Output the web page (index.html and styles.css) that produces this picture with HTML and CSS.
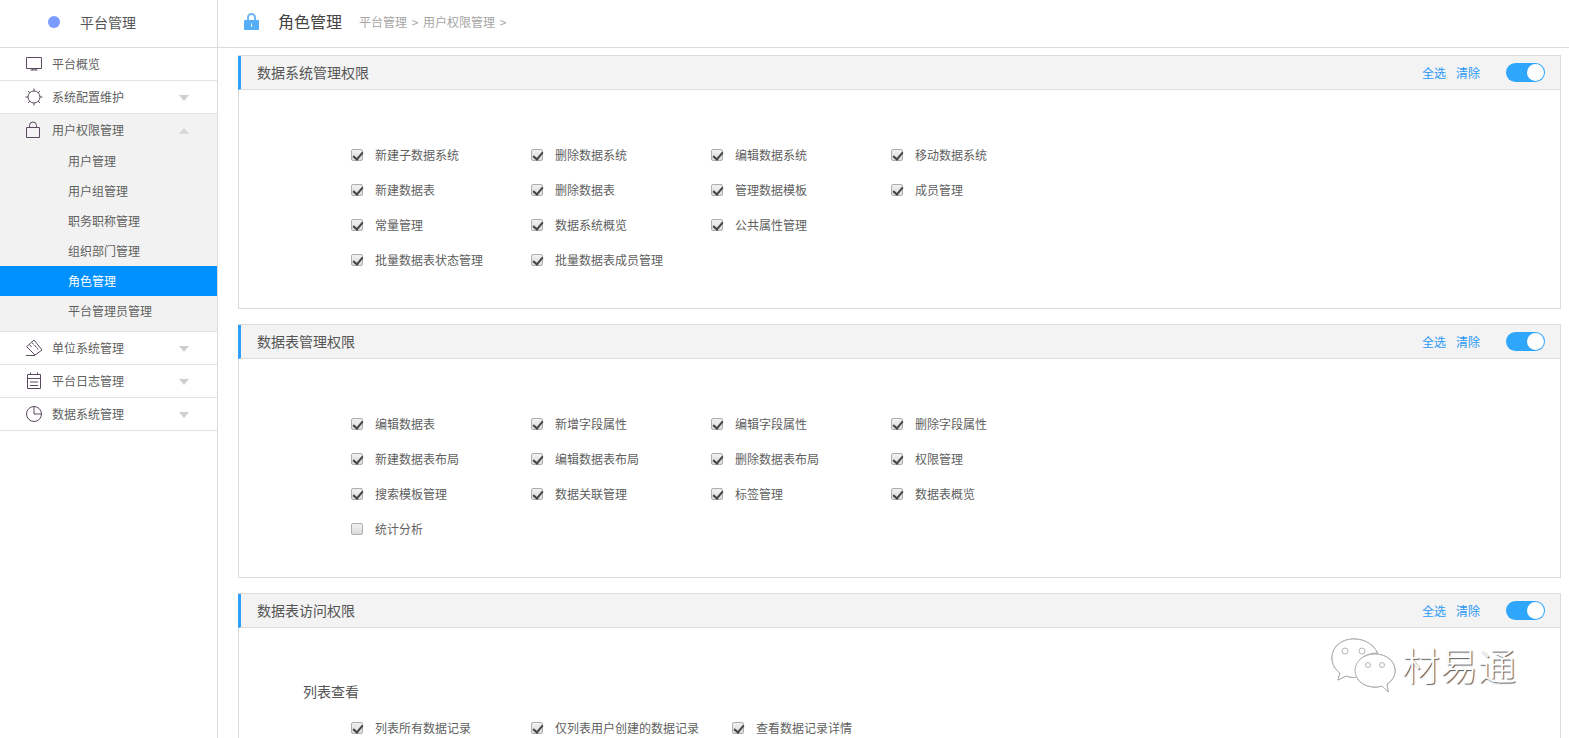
FILE: index.html
```html
<!DOCTYPE html>
<html lang="zh">
<head>
<meta charset="utf-8">
<title>角色管理</title>
<link rel="stylesheet" href="styles.css">
</head>
<body>
<div class="app">
  <aside class="sidebar">
    <div class="brand"><span class="dot"></span><span class="brand-name">平台管理</span></div>
    <nav>
      <div class="nav-row">
        <svg class="nav-icon" viewBox="0 0 18 18"><path d="M1.500 2.500h15v11h-15zM5.500 15h7M7.500 13.500V15M10.500 13.500V15"/></svg>
        <span>平台概览</span>
      </div>
      <div class="nav-row">
        <svg class="nav-icon" viewBox="0 0 18 18"><circle cx="9" cy="9" r="6"/><path d="M9 .5V3M9 15v2.500M.5 9H3M15 9h2.500M3 3l1.800 1.800M13.200 13.200 15 15M3 15l1.800-1.800M13.200 4.800 15 3"/></svg>
        <span>系统配置维护</span><i class="caret"></i>
      </div>
      <div class="nav-group">
        <div class="nav-row open">
          <svg class="nav-icon" viewBox="0 0 18 18"><path d="M1.500 6.500h13v10h-13zM4.500 6.500V4.500a3.500 3.500 0 0 1 7 0v2"/></svg>
          <span>用户权限管理</span><i class="caret up"></i>
        </div>
        <a class="sub">用户管理</a>
        <a class="sub">用户组管理</a>
        <a class="sub">职务职称管理</a>
        <a class="sub">组织部门管理</a>
        <a class="sub active">角色管理</a>
        <a class="sub">平台管理员管理</a>
      </div>
      <div class="nav-row">
        <svg class="nav-icon" viewBox="0 0 18 18"><path d="M1.700 7.700 9 1l8 10-7 5zM4.500 5.500 6.500 8M7 3.500 8.500 5.500M9.500 6 11.500 8.500M12 9 13 10.500M1 16.500h9"/></svg>
        <span>单位系统管理</span><i class="caret"></i>
      </div>
      <div class="nav-row">
        <svg class="nav-icon" viewBox="0 0 18 18"><path d="M2.500 2.500h13v14h-13zM5.500 .5v2M12.500 .5v2M2.500 6.500h13M5 10h8M5 13.500h8"/></svg>
        <span>平台日志管理</span><i class="caret"></i>
      </div>
      <div class="nav-row">
        <svg class="nav-icon" viewBox="0 0 18 18"><circle cx="9" cy="9" r="7.500"/><path d="M9 1.500V9h7.500"/></svg>
        <span>数据系统管理</span><i class="caret"></i>
      </div>
    </nav>
  </aside>

  <main class="main">
    <header class="topbar">
      <svg class="top-icon" viewBox="0 0 15 17"><path class="lock-bow" d="M4 8V4.500a3.500 3.500 0 0 1 7 0V8"/><path class="lock-body" d="M1 7h13a1 1 0 0 1 1 1v8a1 1 0 0 1-1 1H1a1 1 0 0 1-1-1V8a1 1 0 0 1 1-1z"/><path class="lock-key" d="M7 10.500h1V14H7z"/></svg>
      <h1 class="page-title">角色管理</h1>
      <span class="crumbs">平台管理 &gt; 用户权限管理 &gt;</span>
    </header>

    <div class="content">
      <section class="panel">
        <div class="panel-head">
          <h2>数据系统管理权限</h2>
          <a class="link">全选</a><a class="link">清除</a><span class="switch"></span>
        </div>
        <div class="panel-body">
          <div class="row">
            <label class="item"><input type="checkbox" checked>新建子数据系统</label>
            <label class="item"><input type="checkbox" checked>删除数据系统</label>
            <label class="item"><input type="checkbox" checked>编辑数据系统</label>
            <label class="item"><input type="checkbox" checked>移动数据系统</label>
          </div>
          <div class="row">
            <label class="item"><input type="checkbox" checked>新建数据表</label>
            <label class="item"><input type="checkbox" checked>删除数据表</label>
            <label class="item"><input type="checkbox" checked>管理数据模板</label>
            <label class="item"><input type="checkbox" checked>成员管理</label>
          </div>
          <div class="row">
            <label class="item"><input type="checkbox" checked>常量管理</label>
            <label class="item"><input type="checkbox" checked>数据系统概览</label>
            <label class="item"><input type="checkbox" checked>公共属性管理</label>
          </div>
          <div class="row">
            <label class="item"><input type="checkbox" checked>批量数据表状态管理</label>
            <label class="item"><input type="checkbox" checked>批量数据表成员管理</label>
          </div>
        </div>
      </section>

      <section class="panel">
        <div class="panel-head">
          <h2>数据表管理权限</h2>
          <a class="link">全选</a><a class="link">清除</a><span class="switch"></span>
        </div>
        <div class="panel-body">
          <div class="row">
            <label class="item"><input type="checkbox" checked>编辑数据表</label>
            <label class="item"><input type="checkbox" checked>新增字段属性</label>
            <label class="item"><input type="checkbox" checked>编辑字段属性</label>
            <label class="item"><input type="checkbox" checked>删除字段属性</label>
          </div>
          <div class="row">
            <label class="item"><input type="checkbox" checked>新建数据表布局</label>
            <label class="item"><input type="checkbox" checked>编辑数据表布局</label>
            <label class="item"><input type="checkbox" checked>删除数据表布局</label>
            <label class="item"><input type="checkbox" checked>权限管理</label>
          </div>
          <div class="row">
            <label class="item"><input type="checkbox" checked>搜索模板管理</label>
            <label class="item"><input type="checkbox" checked>数据关联管理</label>
            <label class="item"><input type="checkbox" checked>标签管理</label>
            <label class="item"><input type="checkbox" checked>数据表概览</label>
          </div>
          <div class="row">
            <label class="item"><input type="checkbox">统计分析</label>
          </div>
        </div>
      </section>

      <section class="panel">
        <div class="panel-head">
          <h2>数据表访问权限</h2>
          <a class="link">全选</a><a class="link">清除</a><span class="switch"></span>
        </div>
        <div class="panel-body grouped">
          <h3 class="group-title">列表查看</h3>
          <div class="row">
            <label class="item"><input type="checkbox" checked>列表所有数据记录</label>
            <label class="item"><input type="checkbox" checked>仅列表用户创建的数据记录</label>
            <label class="item"><input type="checkbox" checked>查看数据记录详情</label>
          </div>
        </div>
      </section>
    </div>
  </main>
</div>

<div class="watermark">
  <svg class="wm-icon" viewBox="0 0 66 56">
    <path d="M24 1C11 1 2 9 2 20c0 6 3 11 8 15l-2 7 8-4c3 1 6 1.500 9 1.500 0 0 1 0 2 0-1-2-1.500-4-1.500-6.500C25.500 22 35 15 47 15c0 0 0 0 .5 0C44 7 35 1 24 1z"/>
    <path d="M45 16c-11 0-20 7-20 16.500S34 49 45 49c3 0 5-.5 7-1l6 6-1-8c5-3 8-8 8-13.500C65 23 56 16 45 16z"/>
    <circle cx="15" cy="13" r="3"/><circle cx="32" cy="13" r="3"/><circle cx="38" cy="27" r="2.500"/><circle cx="52" cy="27" r="2.500"/>
  </svg>
  <span class="wm-text">材易通</span>
</div>
</body>
</html>
```

FILE: styles.css
```css
* { box-sizing: border-box; }
html, body { margin: 0; height: 100%; overflow: hidden; background: #fff; }
body { font-family: "Noto Sans CJK SC", "Liberation Sans", sans-serif; font-size: 12px; color: #5f5f5f; }

.app { display: flex; height: 738px; overflow: hidden; }

.sidebar { flex: 0 0 218px; border-right: 1px solid #dcdcdc; height: 100%; }
.brand { height: 48px; border-bottom: 1px solid #dcdcdc; display: flex; align-items: center; padding-left: 48px; padding-bottom: 4px; }
.dot { width: 12px; height: 12px; border-radius: 50%; background: #7a9bff; }
.brand-name { margin-left: 20px; font-size: 14px; color: #555; }

.nav-row { height: 33px; border-bottom: 1px solid #e3e3e3; display: flex; align-items: center; padding-left: 25px; position: relative; line-height: 32px; }
.nav-row > span { margin-left: 9px; }
.nav-row.open { height: 32px; border-bottom: 0; }
.nav-icon { width: 18px; height: 18px; fill: none; stroke: #5a4a5e; stroke-width: 1; flex: none; }
.caret { position: absolute; left: 179px; top: 14px; border: 5px solid transparent; border-top: 6px solid #cfcfcf; border-bottom: 0; }
.caret.up { border-top: 0; border-bottom: 6px solid #d8d8d8; }

.nav-group { background: #f2f2f2; border-bottom: 1px solid #e3e3e3; padding-bottom: 5px; }
.sub { display: block; height: 30px; line-height: 30px; padding-left: 68px; color: #5f5f5f; }
.sub.active { background: #0091ff; color: #fff; }

.main { flex: 1; min-width: 0; display: flex; flex-direction: column; }
.topbar { flex: none; height: 48px; border-bottom: 1px solid #dcdcdc; display: flex; align-items: center; padding-left: 26px; padding-bottom: 5px; }
.top-icon { width: 15px; height: 17px; flex: none; }
.lock-bow { fill: none; stroke: #6cb8f8; stroke-width: 2; }
.lock-body { fill: #55aef8; }
.lock-key { fill: #fff; }
.page-title { margin: 0 0 0 19px; font-size: 16px; font-weight: 400; color: #444; }
.crumbs { margin-left: 17px; color: #a5a5a5; word-spacing: 2px; }

.content { padding: 7px 8px 0 20px; }
.panel { border: 1px solid #dcdcdc; margin-bottom: 15px; }
.panel-head { height: 34px; margin-left: -1px; background: #f3f3f3; border-left: 3px solid #2e9ffb; border-bottom: 1px solid #dcdcdc; display: flex; align-items: center; padding-left: 16px; padding-right: 15px; }
.panel-head h2 { margin: -2px auto 0 0; font-size: 14px; font-weight: 400; color: #555; }
.link { color: #2a99f5; margin-right: 10px; }
.link + .link { margin-right: 26px; }
.switch { width: 39px; height: 19px; border-radius: 10px; background: #2ea6fb; position: relative; flex: none; }
.switch::after { content: ""; position: absolute; right: 1px; top: 1px; width: 17px; height: 17px; border-radius: 50%; background: #fff; }

.panel-body { padding: 47px 0 31px 112px; }
.panel-body.grouped { padding-top: 52px; }
.group-title { margin: 0 0 8px -48px; font-size: 14px; line-height: 22px; font-weight: 400; color: #555; }
.row { display: flex; height: 35px; align-items: center; }
.item { min-width: 180px; padding-right: 33px; display: flex; align-items: center; white-space: nowrap; color: #5f5f5f; }
.item input { appearance: none; margin: 0 12px 0 0; width: 12px; height: 12px; flex: none; border: 1px solid #aeaeae; border-radius: 2px; background: linear-gradient(#f1f1f1, #dcdcdc); position: relative; }
.item input:checked::after { content: ""; position: absolute; left: 3px; top: 0; width: 4px; height: 8px; border: solid #444; border-width: 0 2px 2px 0; transform: rotate(40deg); }

.watermark { position: absolute; left: 1330px; top: 638px; display: flex; align-items: flex-start; }
.wm-icon { width: 66px; height: 56px; fill: #fff; stroke: #b5b5b5; stroke-width: 1; flex: none; filter: drop-shadow(.6px .8px 0 #777); }
.wm-text { margin-left: 6px; margin-top: -2px; font-size: 38px; line-height: 56px; font-weight: 300; color: #fff; text-shadow: 1px 1px 1px #555; }
```
